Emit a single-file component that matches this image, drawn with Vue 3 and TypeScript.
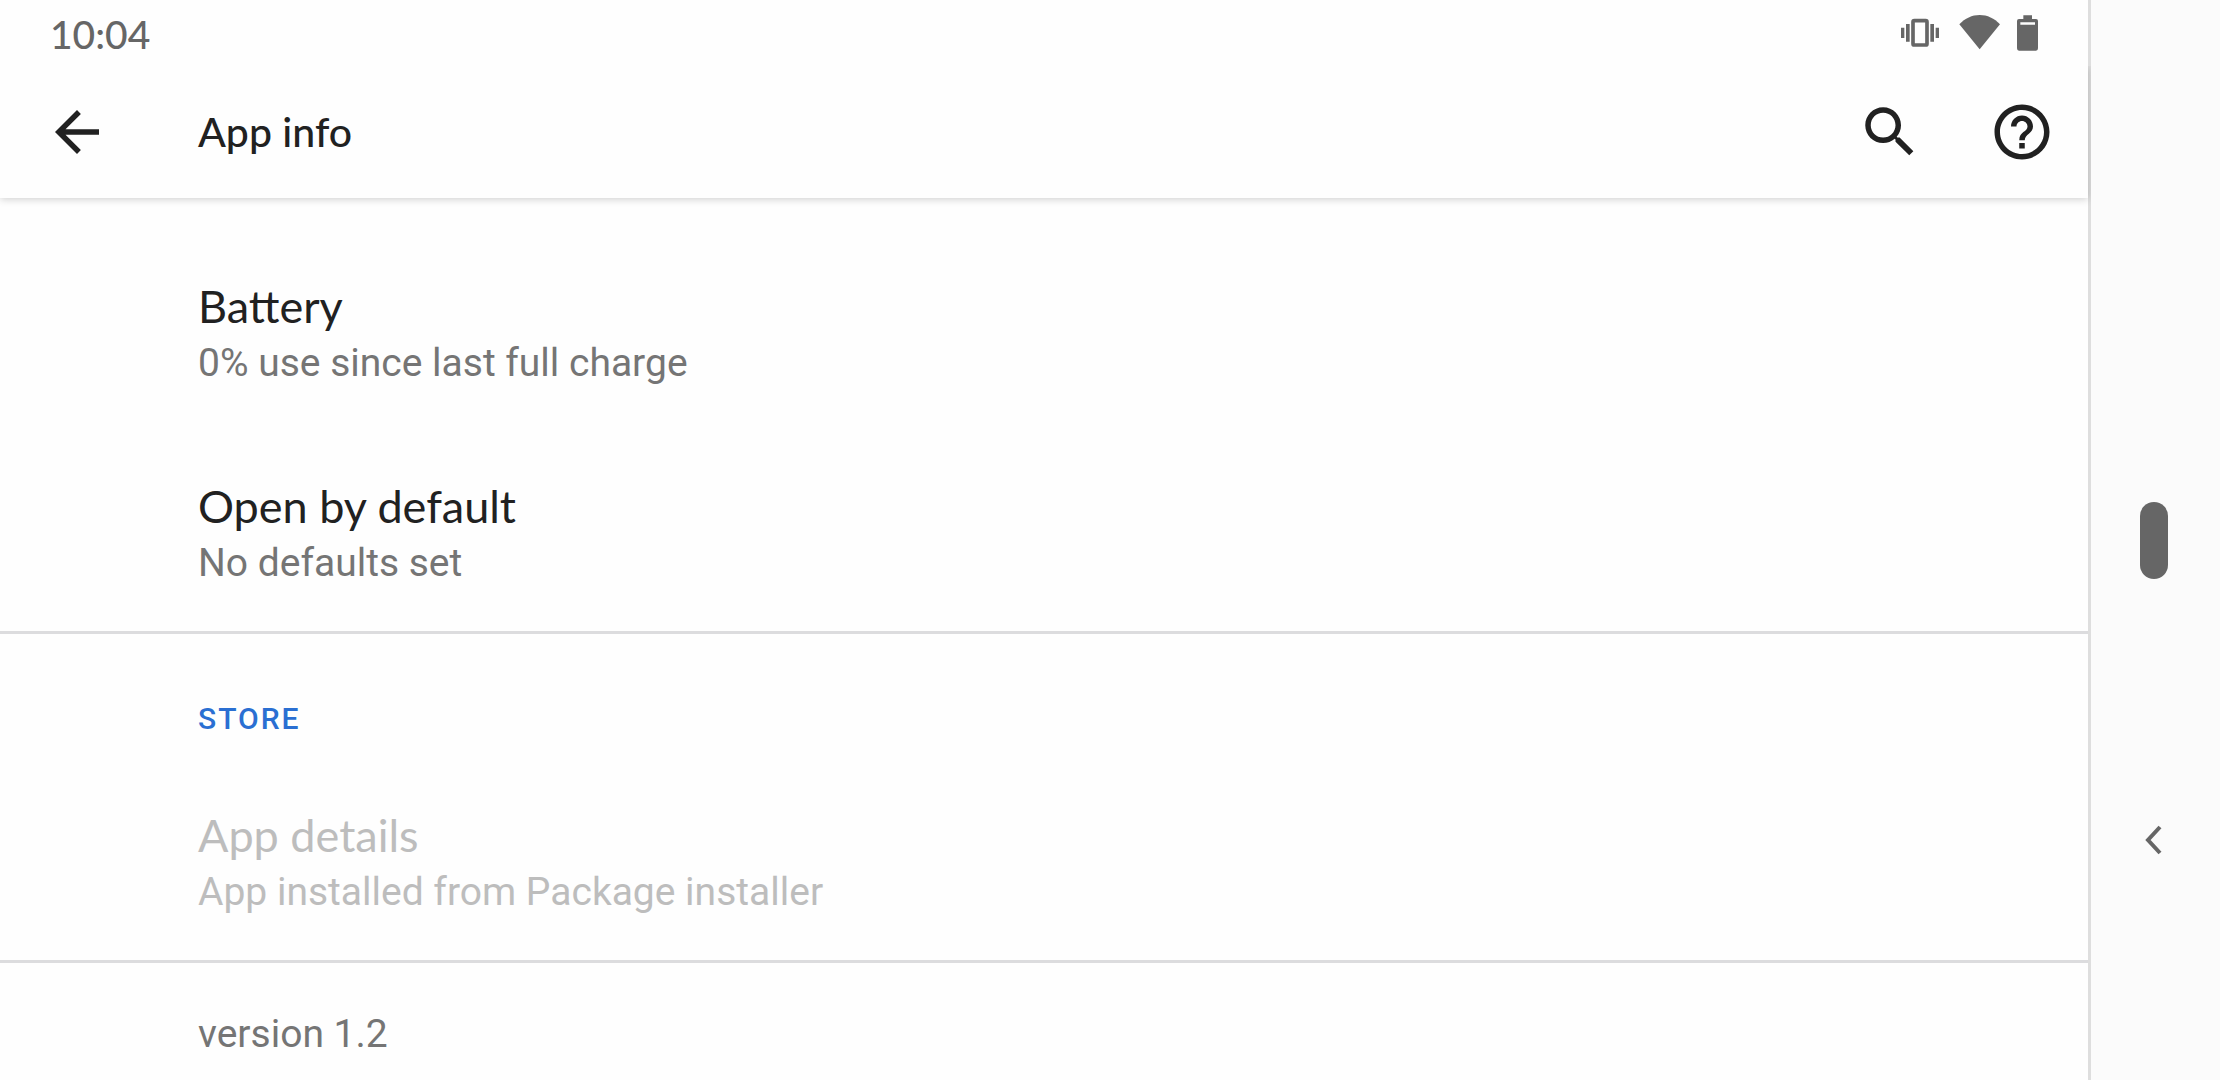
<script setup lang="ts">
interface Preference {
  title: string
  summary: string
  disabled?: boolean
}

const general: Preference[] = [
  { title: 'Battery', summary: '0% use since last full charge' },
  { title: 'Open by default', summary: 'No defaults set' },
]

const store: Preference[] = [
  { title: 'App details', summary: 'App installed from Package installer', disabled: true },
]
</script>

<template>
  <div class="screen">
    <div class="app">
      <div class="status">
        <time class="clock">10:04</time>
        <div class="status-icons">
          <svg width="44" height="40" viewBox="237 36 132 120" role="img" aria-label="Vibrate">
            <rect x="279" y="62" width="42" height="73" rx="4" fill="none" stroke="currentColor" stroke-width="11" />
            <path d="M243 83h10v31h-10zM258 72h11v53h-11zM331 72h11v53h-11zM347 83h10v31h-10z" />
          </svg>
          <svg width="46" height="40" viewBox="411 36 138 120" role="img" aria-label="Wi-Fi">
            <path d="M418 73C435 55 456 45 479 45s44 10 61 28l-61 75z" />
          </svg>
          <svg width="21" height="40" viewBox="591 36 63 120" role="img" aria-label="Battery level">
            <path fill-rule="evenodd" d="M610 46h26v11h12q6 0 6 6v82q0 7-6 7h-51q-6 0-6-7V63q0-6 6-6h13zM601 67v7h44v-7z" />
          </svg>
        </div>
      </div>

      <header class="toolbar">
        <button class="icon-button" type="button" aria-label="Back">
          <svg width="66" height="66" viewBox="0 0 24 24">
            <path d="M20 11H7.83l5.59-5.59L12 4l-8 8 8 8 1.41-1.41L7.83 13H20v-2z" />
          </svg>
        </button>
        <h1 class="heading">App info</h1>
        <div class="actions">
          <button class="icon-button" type="button" aria-label="Search">
            <svg width="66" height="66" viewBox="0 0 24 24">
              <path d="M15.5 14h-.79l-.28-.27C15.41 12.59 16 11.11 16 9.5 16 5.91 13.09 3 9.5 3S3 5.91 3 9.5 5.91 16 9.5 16c1.61 0 3.09-.59 4.23-1.57l.27.28v.79l5 4.99L20.49 19l-4.99-5zm-6 0C7.01 14 5 11.99 5 9.5S7.01 5 9.5 5 14 7.01 14 9.5 11.99 14 9.5 14z" />
            </svg>
          </button>
          <button class="icon-button" type="button" aria-label="Help">
            <svg width="66" height="66" viewBox="0 0 24 24">
              <path d="M11 18h2v-2h-2v2zm1-16C6.48 2 2 6.48 2 12s4.480 10 10 10 10-4.480 10-10S17.520 2 12 2zm0 18c-4.410 0-8-3.590-8-8s3.590-8 8-8 8 3.590 8 8-3.590 8-8 8zm0-14c-2.210 0-4 1.790-4 4h2c0-1.100.9-2 2-2s2 .9 2 2c0 2-3 1.750-3 5h2c0-2.250 3-2.500 3-5 0-2.210-1.790-4-4-4z" />
            </svg>
          </button>
        </div>
      </header>

      <main class="content">
        <section class="group first">
          <button v-for="item in general" :key="item.title" class="row" type="button">
            <span class="title">{{ item.title }}</span>
            <span class="summary">{{ item.summary }}</span>
          </button>
        </section>
        <section class="group">
          <h2 class="category">STORE</h2>
          <button v-for="item in store" :key="item.title" class="row" type="button" :disabled="item.disabled">
            <span class="title">{{ item.title }}</span>
            <span class="summary">{{ item.summary }}</span>
          </button>
        </section>
        <p class="version">version 1.2</p>
      </main>
    </div>

    <nav class="system-nav" aria-label="System navigation">
      <button class="nav-button home" type="button" aria-label="Home">
        <span class="pill"></span>
      </button>
      <button class="nav-button back" type="button" aria-label="Go back">
        <svg width="18" height="30" viewBox="0 0 18 30">
          <path d="M15 2L3 15l12 13" fill="none" stroke="currentColor" stroke-width="4" />
        </svg>
      </button>
    </nav>
  </div>
</template>

<style>
body {
  margin: 0;
  background: #fefefe;
}
</style>

<style scoped>
.screen {
  display: flex;
  min-height: 100vh;
  font-family: Roboto, "Noto Sans", sans-serif;
  color: #212121;
  background: #fefefe;
}

.app {
  flex: 1;
  min-width: 0;
}

button {
  margin: 0;
  padding: 0;
  border: 0;
  background: none;
  color: inherit;
  font: inherit;
  text-align: left;
}

svg {
  display: block;
  fill: currentColor;
}

.status {
  display: flex;
  align-items: flex-start;
  justify-content: space-between;
  box-sizing: border-box;
  height: 66px;
  padding: 12px 50px 0;
  color: #666;
}

.clock {
  font: 500 39px/44px Lato, sans-serif;
}

.status-icons {
  display: flex;
  gap: 14px;
}

.toolbar {
  position: relative;
  z-index: 1;
  display: flex;
  align-items: center;
  height: 132px;
  padding: 0 33px 0 44px;
  background: #fefefe;
  box-shadow: 0 1px 8px rgba(0, 0, 0, 0.2);
  clip-path: inset(0 -3px -12px 0);
}

.heading {
  flex: 1;
  margin: 0 0 0 88px;
  font: 500 41px/52px Lato, sans-serif;
}

.actions {
  display: flex;
  gap: 66px;
}

.group {
  border-bottom: 3px solid #dcdcde;
}

.first {
  padding-top: 33px;
}

.row {
  display: flex;
  flex-direction: column;
  justify-content: center;
  gap: 2px;
  box-sizing: border-box;
  width: 100%;
  height: 200px;
  padding: 8px 44px 0 198px;
}

.title {
  font: 400 45px/54px Lato, sans-serif;
}

.summary,
.version {
  font-size: 39px;
  line-height: 56px;
  color: #757575;
}

.row:disabled {
  color: #bdbdbd;
}

.row:disabled .summary {
  color: #bdbdbd;
}

.category {
  margin: 0;
  padding: 65px 44px 21px 198px;
  font-size: 30px;
  line-height: 40px;
  font-weight: 500;
  letter-spacing: 2px;
  color: #2a6fd2;
}

.version {
  margin: 0;
  padding: 43px 44px 18px 198px;
}

.system-nav {
  display: flex;
  flex-direction: column;
  justify-content: center;
  width: 132px;
  padding-top: 300px;
  box-sizing: border-box;
  background: #fbfbfb;
  box-shadow: inset 3px 0 #dedede;
  color: #666;
}

.nav-button {
  display: flex;
  align-items: center;
  justify-content: center;
  height: 300px;
}

.pill {
  width: 28px;
  height: 77px;
  border-radius: 14px;
  background: currentColor;
}
</style>
